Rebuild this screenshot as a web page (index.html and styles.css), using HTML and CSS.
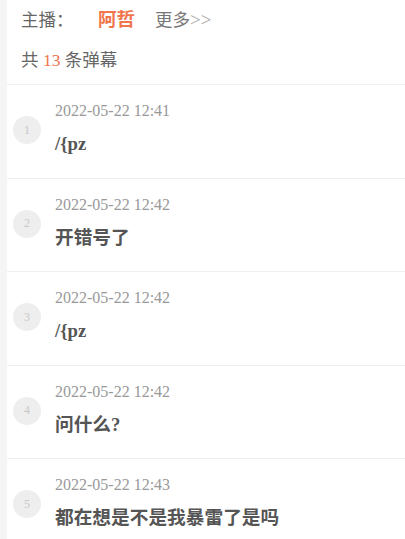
FILE: index.html
```html
<!DOCTYPE html>
<html lang="zh-CN">
<head>
    <meta charset="UTF-8">
    <meta name="viewport" content="width=device-width, initial-scale=1.0">
    <title>弹幕列表</title>
    <link rel="stylesheet" href="styles.css">
</head>
<body>
    <div class="page">
        <div class="header">
            <div class="anchor">
                <span class="label">主播：</span>
                <span class="name">阿哲</span>
                <a class="more">更多<span class="arrows">&gt;&gt;</span></a>
            </div>
            <div class="count">共 <span class="num">13</span> 条弹幕</div>
        </div>
        <ul class="list">
            <li class="item">
                <span class="idx">1</span>
                <div class="body">
                    <div class="time">2022-05-22 12:41</div>
                    <div class="text">/{pz</div>
                </div>
            </li>
            <li class="item">
                <span class="idx">2</span>
                <div class="body">
                    <div class="time">2022-05-22 12:42</div>
                    <div class="text">开错号了</div>
                </div>
            </li>
            <li class="item">
                <span class="idx">3</span>
                <div class="body">
                    <div class="time">2022-05-22 12:42</div>
                    <div class="text">/{pz</div>
                </div>
            </li>
            <li class="item">
                <span class="idx">4</span>
                <div class="body">
                    <div class="time">2022-05-22 12:42</div>
                    <div class="text">问什么?</div>
                </div>
            </li>
            <li class="item">
                <span class="idx">5</span>
                <div class="body">
                    <div class="time">2022-05-22 12:43</div>
                    <div class="text">都在想是不是我暴雷了是吗</div>
                </div>
            </li>
        </ul>
    </div>
</body>
</html>
```

FILE: styles.css
```css
body {
    margin: 0;
    font-family: "Liberation Serif", "Noto Sans CJK SC", serif;
    background-color: #f5f5f5;
    color: #555;
}
.page {
    margin-left: 7px;
    background-color: #fff;
    min-height: 539px;
}
.header {
    padding: 5px 0 0 14px;
    border-bottom: 1px solid #f0f0f0;
}
.anchor {
    display: flex;
    align-items: center;
    height: 26px;
    font-size: 17.5px;
    color: #666;
}
.label {
    width: 77px;
}
.name {
    font-size: 18.5px;
    font-weight: bold;
    color: #f0744c;
    font-family: "Noto Sans CJK SC", sans-serif;
    margin-right: 20px;
}
.more {
    color: #777;
}
.arrows {
    font-size: 19px;
    color: #aaa;
}
.count {
    margin-top: 15px;
    height: 38px;
    font-size: 17.5px;
    color: #666;
}
.num {
    color: #f0744c;
}
.list {
    list-style: none;
    margin: 0;
    padding: 0;
}
.item {
    display: flex;
    align-items: center;
    height: 92.5px;
    border-bottom: 1px solid #f0f0f0;
}
.idx {
    width: 28px;
    height: 28px;
    margin-left: 6px;
    margin-right: 14px;
    border-radius: 50%;
    background-color: #eee;
    color: #c8c8c8;
    font-size: 12px;
    display: flex;
    align-items: center;
    justify-content: center;
    margin-top: -2px;
}
.body {
    display: flex;
    flex-direction: column;
    margin-top: -4px;
}
.time {
    font-size: 16px;
    line-height: 18px;
    color: #999;
}
.text {
    margin-top: 12px;
    font-size: 18.7px;
    line-height: 24px;
    font-weight: bold;
    color: #555;
}
```
